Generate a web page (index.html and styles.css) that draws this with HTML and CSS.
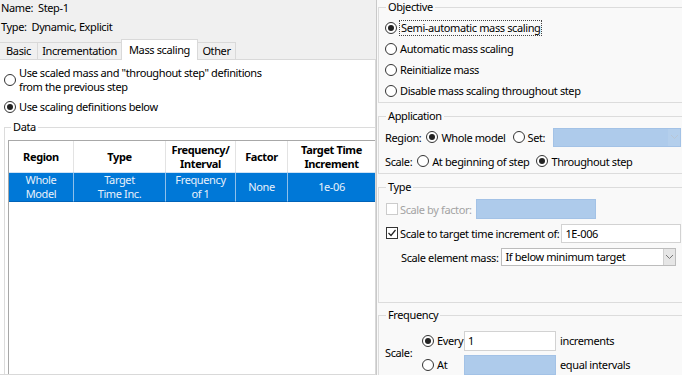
FILE: index.html
```html
<!DOCTYPE html>
<html lang="en">
<head>
    <meta charset="UTF-8">
    <title>Edit Step - Mass scaling</title>
    <link rel="stylesheet" href="styles.css">
</head>
<body>
<div class="screen">

    <!-- Izquierda: pestaña Mass scaling -->
    <div class="step-panel">
        <div class="meta">
            <div>Name:&nbsp; Step-1</div>
            <div>Type:&nbsp; Dynamic, Explicit</div>
        </div>
        <div class="tabs">
            <div class="tab tab-basic">Basic</div>
            <div class="tab tab-inc">Incrementation</div>
            <div class="tab tab-mass active">Mass scaling</div>
            <div class="tab tab-other">Other</div>
        </div>
        <div class="tab-body">
            <div class="opt">
                <span class="radio"></span>
                <span>Use scaled mass and "throughout step" definitions<br>from the previous step</span>
            </div>
            <div class="opt opt-second">
                <span class="radio on"></span>
                <span>Use scaling definitions below</span>
            </div>

            <fieldset class="data-group">
                <legend>Data</legend>
                <div class="grid">
                    <div class="grid-row grid-head">
                        <div class="cell">Region</div>
                        <div class="cell">Type</div>
                        <div class="cell">Frequency/<br>Interval</div>
                        <div class="cell">Factor</div>
                        <div class="cell">Target Time<br>Increment</div>
                    </div>
                    <div class="grid-row grid-sel">
                        <div class="cell">Whole<br>Model</div>
                        <div class="cell">Target<br>Time Inc.</div>
                        <div class="cell">Frequency<br>of 1</div>
                        <div class="cell">None</div>
                        <div class="cell">1e-06</div>
                    </div>
                </div>
            </fieldset>
        </div>
    </div>

    <div class="divider"></div>

    <!-- Derecha: opciones de escalado -->
    <div class="scale-panel">
        <fieldset class="box box-objective">
            <legend>Objective</legend>
            <div class="row"><span class="radio on"></span><span class="focus">Semi-automatic mass scaling</span></div>
            <div class="row"><span class="radio"></span><span>Automatic mass scaling</span></div>
            <div class="row"><span class="radio"></span><span>Reinitialize mass</span></div>
            <div class="row"><span class="radio"></span><span>Disable mass scaling throughout step</span></div>
        </fieldset>

        <fieldset class="box box-application">
            <legend>Application</legend>
            <div class="row tall">
                <span class="lbl">Region:</span>
                <span class="radio on"></span><span class="choice">Whole model</span>
                <span class="radio"></span><span>Set:</span>
                <span class="combo"><span class="combo-arrow"><svg width="9" height="6" viewBox="0 0 9 6"><polyline points="1,1 4.5,4.5 8,1" fill="none" stroke="#b8c6d6" stroke-width="1"/></svg></span></span>
            </div>
            <div class="row tall">
                <span class="lbl">Scale:</span>
                <span class="radio"></span><span class="choice">At beginning of step</span>
                <span class="radio on"></span><span>Throughout step</span>
            </div>
        </fieldset>

        <fieldset class="box box-type">
            <legend>Type</legend>
            <div class="row type-row">
                <span class="check off"></span><span class="muted">Scale by factor:</span>
                <span class="field blue factor-field"></span>
            </div>
            <div class="row type-row">
                <span class="check"><svg width="10" height="10" viewBox="0 0 10 10"><polyline points="1.5,5 4,7.5 8.5,2" fill="none" stroke="#222" stroke-width="1.2"/></svg></span>
                <span>Scale to target time increment of:</span>
                <span class="field target-field">1E-006</span>
            </div>
            <div class="row type-row element-row">
                <span>Scale element mass:</span>
                <span class="select">If below minimum target<span class="select-arrow"><svg width="9" height="6" viewBox="0 0 9 6"><polyline points="1,1 4.5,4.5 8,1" fill="none" stroke="#777" stroke-width="1"/></svg></span></span>
            </div>
        </fieldset>

        <fieldset class="box box-frequency">
            <legend>Frequency</legend>
            <div class="freq">
                <span class="freq-label">Scale:</span>
                <div class="freq-rows">
                    <div class="freq-row">
                        <span class="freq-choice"><span class="radio on"></span><span>Every</span></span>
                        <span class="field freq-field">1</span>
                        <span>increments</span>
                    </div>
                    <div class="freq-row">
                        <span class="freq-choice"><span class="radio"></span><span>At</span></span>
                        <span class="field blue freq-field"></span>
                        <span>equal intervals</span>
                    </div>
                </div>
            </div>
        </fieldset>
    </div>

</div>
</body>
</html>
```

FILE: styles.css
```css
body {
    margin: 0;
    font-family: "Noto Sans", sans-serif;
    font-size: 11px;
    letter-spacing: -0.38px;
    color: #000;
}

.screen {
    display: flex;
    width: 682px;
    height: 375px;
    overflow: hidden;
}

/* Panel izquierdo */
.step-panel {
    width: 376px;
    flex: none;
    background-color: #f0f0f0;
    display: flex;
    flex-direction: column;
    overflow: hidden;
}

.meta {
    display: flex;
    flex-direction: column;
    gap: 3px;
    padding-left: 1px;
}

.meta div {
    height: 16px;
    line-height: 16px;
}

.tabs {
    display: flex;
    align-items: flex-end;
    height: 20px;
    margin-top: 4px;
    margin-left: -1px;
}

.tab {
    box-sizing: border-box;
    height: 17px;
    line-height: 15px;
    border: 1px solid #d9d9d9;
    border-bottom: none;
    margin-right: -1px;
    text-align: center;
    background-color: #f0f0f0;
}

.tab.active {
    height: 21px;
    padding-top: 2px;
    background-color: #fff;
    margin-bottom: -1px;
    position: relative;
    z-index: 1;
}

.tab-basic { width: 39px; }
.tab-inc { width: 85px; }
.tab-mass { width: 77px; }
.tab-other { width: 39px; }

.tab-body {
    flex: 1;
    background-color: #fff;
    border: 1px solid #d9d9d9;
    margin-left: -1px;
    padding-top: 6px;
    overflow: hidden;
}

.opt {
    display: flex;
    align-items: center;
    gap: 3px;
    padding-left: 4px;
    line-height: 14px;
}

.opt-second {
    margin-top: 6px;
}

.radio {
    box-sizing: border-box;
    flex: none;
    width: 12px;
    height: 12px;
    border: 1px solid #333;
    border-radius: 50%;
    background-color: #fff;
    display: inline-flex;
    align-items: center;
    justify-content: center;
}

.radio.on::after {
    content: "";
    width: 6px;
    height: 6px;
    border-radius: 50%;
    background-color: #222;
}

.data-group {
    margin: 6px 0 0 4px;
    padding: 6px 0 0 3px;
    border: 1px solid #dcdcdc;
    width: 420px;
    height: 320px;
    box-sizing: border-box;
}

.data-group legend {
    padding: 0 2px;
    margin-left: 3px;
    line-height: 14px;
}

.grid {
    width: 366px;
    height: 260px;
    background-color: #fff;
    border: 1px solid #a8a8a8;
}

.grid-row {
    display: grid;
    grid-template-columns: 65px 92px 70px 52px 87px;
}

.cell {
    box-sizing: border-box;
    border-right: 1px solid #e3e3e3;
    display: flex;
    align-items: center;
    justify-content: center;
    text-align: center;
    line-height: 14px;
}

.cell:last-child {
    border-right: none;
}

.grid-head .cell {
    height: 31px;
    font-weight: bold;
}

.grid-sel .cell {
    height: 30px;
    background-color: #0078d7;
    color: #e8f1fb;
    border-right-color: #8fc0ea;
    border-top: 1px solid #cfe3f5;
    border-bottom: 1px solid #0063b8;
}

/* Panel derecho */
.divider {
    width: 1px;
    flex: none;
    background-color: #c9c9c9;
}

.scale-panel {
    flex: 1;
    background-color: #f9f9f9;
    padding-left: 1px;
    overflow: hidden;
}

.box {
    box-sizing: border-box;
    width: 340px;
    margin: 6px 0 0 0;
    padding: 2px 0 0 6px;
    border: 1px solid #dcdcdc;
}

.box legend {
    padding: 0 2px;
    margin-left: 1px;
    line-height: 14px;
}

.box-objective {
    margin-top: 0;
    padding-top: 3px;
    padding-bottom: 1px;
}

.row {
    display: flex;
    align-items: center;
    gap: 3px;
    height: 21px;
    white-space: nowrap;
}

.row.tall {
    height: 24px;
}

.focus {
    outline: 1px dotted #444;
    outline-offset: 0;
    padding: 0 1px;
    line-height: 14px;
}

.lbl {
    margin-right: 2px;
}

.choice {
    margin-right: 4px;
}

.combo {
    box-sizing: border-box;
    width: 128px;
    height: 19px;
    margin-left: 5px;
    background-color: #aecbeb;
    border: 1px solid #a3c2e6;
    display: flex;
    justify-content: flex-end;
}

.combo-arrow {
    width: 12px;
    display: flex;
    align-items: center;
    justify-content: center;
    background-color: #b4cfec;
}

.box-type {
    padding-top: 4px;
    padding-bottom: 34px;
}

.type-row {
    height: 22px;
    gap: 2px;
}

.type-row + .type-row {
    margin-top: 2px;
}

.check {
    box-sizing: border-box;
    flex: none;
    width: 12px;
    height: 12px;
    margin-left: 1px;
    border: 1px solid #333;
    background-color: #fff;
    display: inline-flex;
    align-items: center;
    justify-content: center;
}

.check.off {
    border-color: #cccccc;
}

.muted {
    color: #a3a3a3;
}

.field {
    box-sizing: border-box;
    height: 19px;
    line-height: 17px;
    padding-left: 3px;
    background-color: #fff;
    border: 1px solid #d2d2d2;
}

.field.blue {
    background-color: #aecbeb;
    border-color: #a3c2e6;
}

.factor-field {
    width: 120px;
    height: 20px;
    margin-left: 2px;
}

.target-field {
    width: 120px;
}

.element-row {
    padding-left: 16px;
}

.select {
    box-sizing: border-box;
    width: 175px;
    height: 18px;
    line-height: 16px;
    margin-left: 1px;
    padding-left: 3px;
    background-color: #fff;
    border: 1px solid #bcbcbc;
    display: flex;
    justify-content: space-between;
}

.select-arrow {
    width: 11px;
    display: flex;
    align-items: center;
    justify-content: center;
    background-color: #e6e6e6;
    border-left: 1px solid #d0d0d0;
}

.box-frequency {
    margin-top: 5px;
    padding-top: 8px;
    height: 90px;
}

.freq {
    display: flex;
    align-items: center;
}

.freq-label {
    width: 37px;
}

.freq-rows {
    display: flex;
    flex-direction: column;
    gap: 3px;
}

.freq-row {
    display: flex;
    align-items: center;
    height: 21px;
    gap: 4px;
}

.freq-choice {
    width: 38px;
    display: flex;
    align-items: center;
    gap: 3px;
}

.freq-field {
    width: 92px;
    height: 20px;
}
```
